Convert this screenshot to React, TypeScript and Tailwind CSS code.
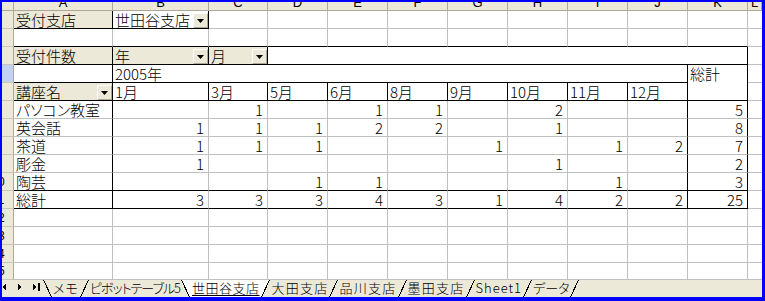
import React from "react";

type Line = "g" | "k" | "n";
interface Spec {
  t?: string;
  num?: boolean;
  beige?: boolean;
  r: Line;
  b: Line;
  dd?: boolean;
  cls?: string;
  top?: boolean;
}

const R: Record<Line, string> = {
  g: "border-r border-r-[#c0c0c0]",
  k: "border-r border-r-black",
  n: "",
};
const B: Record<Line, string> = {
  g: "border-b border-b-[#c0c0c0]",
  k: "border-b border-b-black",
  n: "",
};

function Dropdown() {
  return (
    <div className="ml-auto shrink-0 w-[15px] h-[15px] bg-[#ece9d8] border border-t-white border-l-white border-r-[#aca899] border-b-[#aca899] flex items-center justify-center">
      <svg width="7" height="4" className="block">
        <polygon points="0,0 7,0 3.5,4" fill="#000" />
      </svg>
    </div>
  );
}

function Cell({ s }: { s: Spec }) {
  const cls = [
    "flex min-w-0 overflow-hidden",
    s.top ? "items-start" : "items-end",
    s.num ? "justify-end pr-[4px]" : "pl-[2px]",
    s.beige ? "bg-[#ece9d8]" : "bg-white",
    R[s.r],
    B[s.b],
    s.cls ?? "",
  ].join(" ");
  return (
    <div className={cls}>
      {s.t ? (
        <span className={`whitespace-nowrap leading-[16px] ${s.top ? "mt-[1px]" : ""}`}>{s.t}</span>
      ) : null}
      {s.dd ? <Dropdown /> : null}
    </div>
  );
}

function RowHdr({ n, sel }: { n: number; sel?: boolean }) {
  return (
    <div
      className={`${sel ? "bg-[#c1d2ee]" : "bg-[#ece9d8]"} border-r border-r-[#aca899] border-b border-b-[#cbc7b8] overflow-hidden flex items-end`}
    >
      <span className="w-[30px] ml-[-19px] shrink-0 text-center text-[12px] leading-[16px] font-normal font-['Liberation_Sans',Arial,sans-serif]">
        {n}
      </span>
    </div>
  );
}

const blank = (r: Line, b: Line): Spec => ({ r, b });
const letters = "ABCDEFGHIJKL".split("");
const months = ["1月", "3月", "5月", "6月", "8月", "9月", "10月", "11月", "12月"];
const data: { name: string; vals: string[]; total: string }[] = [
  { name: "パソコン教室", vals: ["", "1", "", "1", "1", "", "2", "", ""], total: "5" },
  { name: "英会話", vals: ["1", "1", "1", "2", "2", "", "1", "", ""], total: "8" },
  { name: "茶道", vals: ["1", "1", "1", "", "", "1", "", "1", "2"], total: "7" },
  { name: "彫金", vals: ["1", "", "", "", "", "", "1", "", ""], total: "2" },
  { name: "陶芸", vals: ["", "", "1", "1", "", "", "", "1", ""], total: "3" },
];
const totals = ["3", "3", "3", "4", "3", "1", "4", "2", "2"];

const rows: { n: number; sel?: boolean; cells: Spec[] }[] = [];
rows.push({
  n: 1,
  cells: [
    { t: "受付支店", beige: true, r: "k", b: "k" },
    { t: "世田谷支店", r: "k", b: "k", dd: true },
    ...Array.from({ length: 9 }, () => blank("g", "g")),
    blank("n", "g"),
  ],
});
rows.push({
  n: 2,
  cells: [...Array.from({ length: 11 }, () => blank("g", "k")), blank("n", "g")],
});
rows.push({
  n: 3,
  cells: [
    { t: "受付件数", beige: true, r: "k", b: "k" },
    { t: "年", beige: true, r: "k", b: "k", dd: true },
    { t: "月", beige: true, r: "k", b: "k", dd: true },
    { r: "k", b: "k", cls: "col-span-8" },
    blank("n", "g"),
  ],
});
rows.push({
  n: 4,
  sel: true,
  cells: [
    { r: "k", b: "k" },
    { t: "2005年", r: "k", b: "k", cls: "col-span-9" },
    { t: "総計", r: "k", b: "k", cls: "row-span-2", top: true },
    blank("n", "g"),
  ],
});
rows.push({
  n: 5,
  cells: [
    { t: "講座名", beige: true, r: "k", b: "k", dd: true },
    ...months.map((m) => ({ t: m, r: "k" as Line, b: "k" as Line })),
    blank("n", "g"),
  ],
});
data.forEach((d, i) => {
  const b: Line = i === data.length - 1 ? "k" : "g";
  rows.push({
    n: 6 + i,
    cells: [
      { t: d.name, r: "k", b },
      ...d.vals.map((v, j) => ({ t: v, num: true, r: (j === 8 ? "k" : "g") as Line, b })),
      { t: d.total, num: true, r: "k", b },
      blank("n", "g"),
    ],
  });
});
rows.push({
  n: 11,
  cells: [
    { t: "総計", r: "k", b: "k" },
    ...totals.map((v, j) => ({ t: v, num: true, r: (j === 8 ? "k" : "g") as Line, b: "k" as Line })),
    { t: "25", num: true, r: "k", b: "k" },
    blank("n", "g"),
  ],
});
for (let n = 12; n <= 15; n++) {
  rows.push({
    n,
    cells: [...Array.from({ length: 11 }, () => blank("g", "g")), blank("n", "g")],
  });
}

function Back({ active }: { active?: boolean }) {
  return (
    <svg width="9" height="17" className="block shrink-0" shapeRendering="crispEdges">
      {active ? <polygon points="0,0 9,0 9,17" fill="#fff" /> : null}
      <line x1="0.5" y1="0" x2="8.5" y2="17" stroke="#000" strokeWidth="1" />
    </svg>
  );
}
function Fwd({ active }: { active?: boolean }) {
  return (
    <svg width="9" height="17" className="block shrink-0" shapeRendering="crispEdges">
      {active ? <polygon points="0,0 9,0 0,17" fill="#fff" /> : null}
      <line x1="0.5" y1="17" x2="8.5" y2="0" stroke="#000" strokeWidth="1" />
    </svg>
  );
}

function Tab({ label, cls }: { label: string; cls?: string }) {
  return <span className={`px-[1px] leading-[15px] whitespace-nowrap ${cls ?? ""}`}>{label}</span>;
}

export default function App() {
  return (
    <div className="w-[765px] h-[301px] bg-[#0000ff] pl-[2px] pt-[2px] pr-[3px] pb-[4px] overflow-hidden">
      <div className="w-full h-full bg-white flex flex-col font-['Noto_Sans_CJK_JP','Noto_Sans',sans-serif] text-black [font-feature-settings:'palt']">
        <div className="grid grid-cols-[12px_99px_96px_59px_repeat(8,60px)_1fr] grid-rows-[9px_repeat(14,18px)_17px] h-[278px] overflow-hidden text-[15px] font-light">
          <div className="bg-[#ece9d8] border-r border-r-[#aca899] border-b border-b-[#aca899]" />
          {letters.map((l) => (
            <div
              key={l}
              className="bg-[#ece9d8] border-r border-r-[#aca899] border-b border-b-[#aca899] overflow-hidden flex justify-center items-end"
            >
              <span className="text-[13px] leading-[12px] mb-[1px] font-normal font-['Liberation_Sans',Arial,sans-serif]">{l}</span>
            </div>
          ))}
          {rows.map((row) => (
            <React.Fragment key={row.n}>
              <RowHdr n={row.n} sel={row.sel} />
              {row.cells.map((s, i) => (
                <Cell key={i} s={s} />
              ))}
            </React.Fragment>
          ))}
        </div>
        <div className="h-[17px] bg-[#ece9d8] flex items-start text-[13px] font-light overflow-hidden">
          <svg width="41" height="17" className="block shrink-0" shapeRendering="crispEdges">
            <polygon points="0,7 4,3.5 4,10.5" fill="#000" />
            <polygon points="16,3.5 20,7 16,10.5" fill="#000" />
            <polygon points="31,3.5 35,7 31,10.5" fill="#000" />
            <rect x="36" y="3" width="2" height="8" fill="#000" />
          </svg>
          <Back />
          <Tab label="メモ" cls="tracking-[1px]" />
          <Fwd />
          <Tab label="ピボットテーブル5" cls="tracking-[-1px]" />
          <Back active />
          <span className="bg-white px-[2px] h-[17px] leading-[15px] whitespace-nowrap tracking-[0.5px]">
            <span className="underline decoration-black underline-offset-[2px]">世田谷支店</span>
          </span>
          <Fwd active />
          <Tab label="大田支店" cls="tracking-[1.25px]" />
          <Fwd />
          <Tab label="品川支店" cls="tracking-[1.25px]" />
          <Fwd />
          <Tab label="墨田支店" cls="tracking-[1.25px]" />
          <Fwd />
          <Tab label="Sheet1" cls="tracking-[1px]" />
          <Fwd />
          <Tab label="データ" />
          <Fwd />
        </div>
      </div>
    </div>
  );
}
